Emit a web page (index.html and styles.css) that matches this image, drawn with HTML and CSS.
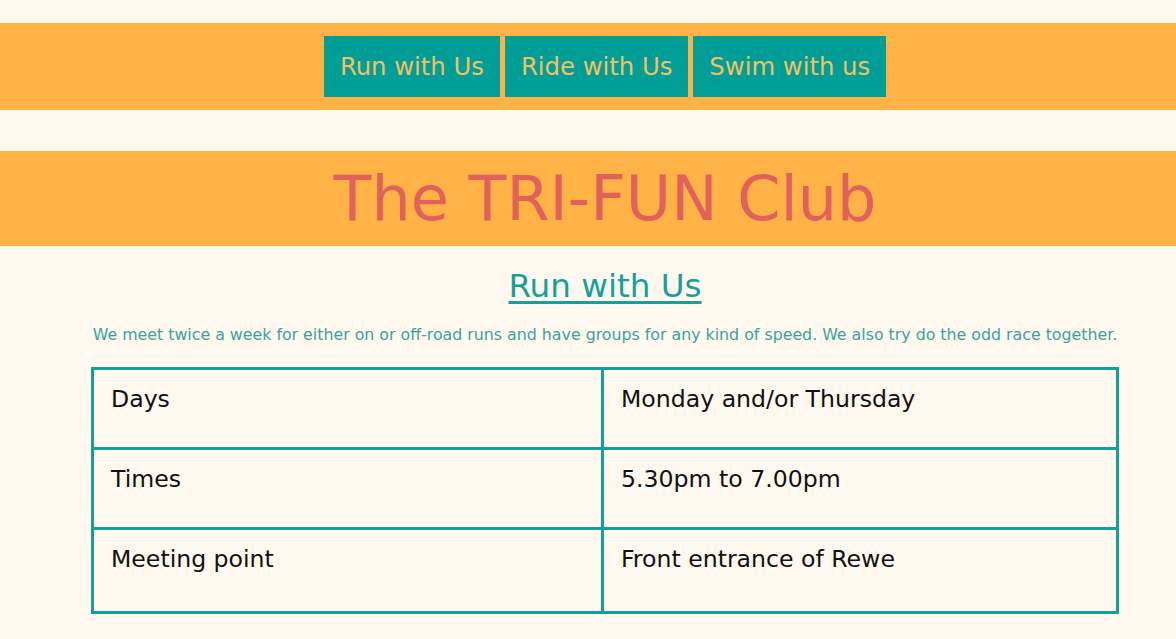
FILE: index.html
```html
<!DOCTYPE html>
<html lang="en">
<head>
<meta charset="utf-8">
<title>The TRI-FUN Club</title>
<link rel="stylesheet" href="styles.css">
</head>
<body>
<nav class="nav">
  <a class="nav-link" href="#run">Run with Us</a>
  <a class="nav-link" href="#ride">Ride with Us</a>
  <a class="nav-link" href="#swim">Swim with us</a>
</nav>
<header class="banner">
  <h1 class="title">The TRI-FUN Club</h1>
</header>
<main class="content">
  <h2 class="section-title" id="run"><a href="#run">Run with Us</a></h2>
  <p class="intro">We meet twice a week for either on or off-road runs and have groups for any kind of speed. We also try do the odd race together.</p>
  <table class="info">
    <colgroup><col class="col-label"><col></colgroup>
    <tr><td>Days</td><td>Monday and/or Thursday</td></tr>
    <tr><td>Times</td><td>5.30pm to 7.00pm</td></tr>
    <tr class="last"><td>Meeting point</td><td>Front entrance of Rewe</td></tr>
  </table>
</main>
</body>
</html>
```

FILE: styles.css
```css
html, body {
  margin: 0;
  padding: 0;
  background: #fff8ee;
  font-family: "DejaVu Sans", Verdana, sans-serif;
}

.nav {
  margin-top: 23px;
  background: #ffb347;
  padding: 13px 0 13px 34px;
  display: flex;
  justify-content: center;
  gap: 5px;
}

.nav-link {
  display: block;
  background: #009e97;
  color: #f2c15f;
  text-decoration: none;
  font-size: 24.3px;
  height: 61px;
  line-height: 61px;
  padding: 0 16px;
}

.banner {
  margin-top: 41px;
  background: #ffb347;
  height: 95px;
  padding-left: 34px;
}

.title {
  margin: 0;
  font-size: 62px;
  font-weight: normal;
  line-height: 95px;
  text-align: center;
  color: #e2625b;
}

.content {
  padding-left: 34px;
  text-align: center;
}

.section-title {
  margin: 20px 0 0;
  font-size: 32.6px;
  font-weight: normal;
  line-height: 40px;
}

.section-title a {
  color: #16a09a;
  text-decoration: underline;
  text-decoration-thickness: 3px;
  text-underline-offset: 4px;
}

.intro {
  margin: 19px 0 0;
  font-size: 15.8px;
  line-height: 20px;
  color: #3aa3a0;
}

.info {
  margin: 22px auto 0;
  width: 1028px;
  border-collapse: collapse;
  border: 3px solid #14a09a;
  table-layout: fixed;
  text-align: left;
}

.col-label {
  width: 510px;
}

.info td {
  border: 3px solid #14a09a;
  height: 80px;
  box-sizing: border-box;
  vertical-align: top;
  padding: 15px 17px;
  font-size: 23.6px;
  color: #111;
}

.info .last td {
  height: 84px;
}
```
